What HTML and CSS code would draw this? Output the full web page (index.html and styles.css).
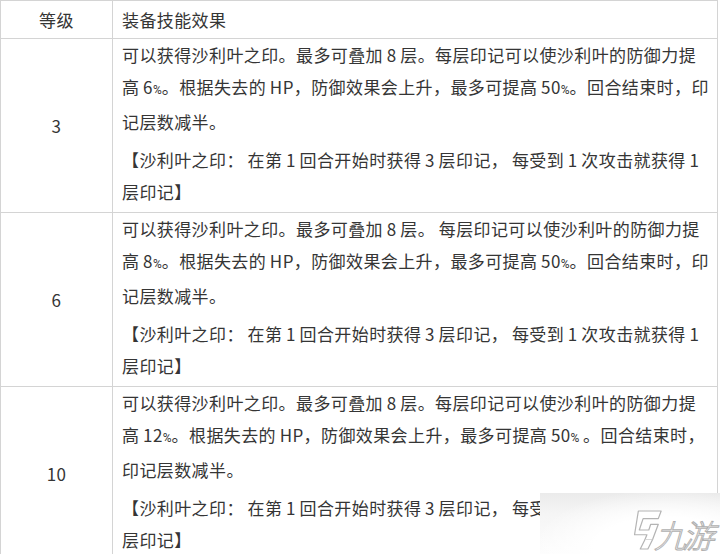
FILE: index.html
```html
<!DOCTYPE html>
<html lang="zh-CN">
<head>
<meta charset="utf-8">
<title>装备技能效果</title>
<link rel="stylesheet" href="styles.css">
</head>
<body>
<div class="page">
  <table class="skill-table">
    <colgroup>
      <col class="c-level">
      <col class="c-effect">
    </colgroup>
    <thead>
      <tr>
        <th class="col-level">等级</th>
        <th class="col-effect">装备技能效果</th>
      </tr>
    </thead>
    <tbody>
      <tr>
        <td class="col-level">3</td>
        <td class="col-effect">
          <p>可以获得沙利叶之印。最多可叠加 8 层。每层印记可以使沙利叶的防御力提<br>高 6<span class="pct">%</span>。根据失去的 HP，防御效果会上升，最多可提高 50<span class="pct">%</span>。回合结束时，印<br>记层数减半。</p>
          <p class="note">【沙利叶之印： 在第 1 回合开始时获得 3 层印记， 每受到 1 次攻击就获得 1<br>层印记】</p>
        </td>
      </tr>
      <tr>
        <td class="col-level">6</td>
        <td class="col-effect">
          <p>可以获得沙利叶之印。最多可叠加 8 层。 每层印记可以使沙利叶的防御力提<br>高 8<span class="pct">%</span>。根据失去的 HP，防御效果会上升，最多可提高 50<span class="pct">%</span>。回合结束时，印<br>记层数减半。</p>
          <p class="note">【沙利叶之印： 在第 1 回合开始时获得 3 层印记， 每受到 1 次攻击就获得 1<br>层印记】</p>
        </td>
      </tr>
      <tr>
        <td class="col-level">10</td>
        <td class="col-effect">
          <p>可以获得沙利叶之印。最多可叠加 8 层。每层印记可以使沙利叶的防御力提<br>高 12<span class="pct">%</span>。根据失去的 HP，防御效果会上升，最多可提高 50<span class="pct">%</span> 。回合结束时，<br>印记层数减半。</p>
          <p class="note">【沙利叶之印： 在第 1 回合开始时获得 3 层印记， 每受到 1 次攻击就获得 1<br>层印记】</p>
        </td>
      </tr>
    </tbody>
  </table>
  <div class="watermark">
    <div class="wm-brand">
      <svg class="wm-logo" viewBox="0 0 40 46" width="38" height="44" aria-hidden="true">
        <path d="M13 3 L37 3 L34 11 L18 11 L14 23 L24 23 L26 17 L34 17 L28 33 L20 33 L22 28 L9 28 Z" fill="#fff" stroke="#b4b4b4" stroke-width="1.3" stroke-linejoin="round"/>
        <path d="M20 33 L15 43 L23 43 L28 33" fill="#fff" stroke="#b4b4b4" stroke-width="1.3" stroke-linejoin="round"/>
      </svg>
      <span class="wm-text">九游</span>
    </div>
  </div>
</div>
</body>
</html>
```

FILE: styles.css
```css
html, body {
  margin: 0;
  padding: 0;
  background: #fff;
}

.page {
  position: relative;
  width: 720px;
  height: 554px;
  overflow: hidden;
}

.skill-table {
  border-collapse: collapse;
  table-layout: fixed;
  width: 717px;
  font-family: "Noto Sans CJK SC", "Liberation Sans", sans-serif;
  font-size: 17px;
  letter-spacing: 0.4px;
  word-spacing: -0.5px;
  color: #353535;
}

.c-level {
  width: 112px;
}

.c-effect {
  width: 605px;
}

.skill-table th,
.skill-table td {
  border: 1px solid #d4d4d4;
  font-weight: normal;
  vertical-align: middle;
  padding: 0 4px 4px 9px;
}

.skill-table th {
  height: 37px;
  padding: 0 4px 0 9px;
  text-align: left;
}

.skill-table .col-level {
  text-align: center;
  padding-left: 4px;
}

.skill-table td.col-level {
  padding-top: 2px;
  padding-bottom: 2px;
}

.skill-table p {
  margin: 0;
  line-height: 32px;
  white-space: nowrap;
}

.skill-table p.note {
  margin-top: 6px;
}

.pct {
  font-family: Roboto, "Liberation Sans", sans-serif;
  font-size: 12px;
  letter-spacing: 0;
}

.watermark {
  position: absolute;
  left: 540px;
  top: 493px;
  width: 180px;
  height: 61px;
  background:
    radial-gradient(ellipse at 70% 90%, #ffffff 0%, #ffffff 40%, rgba(255,255,255,0) 75%),
    linear-gradient(to bottom, #ebebeb 0%, #f5f5f5 35%, #fdfdfd 100%);
}

.wm-brand {
  position: absolute;
  right: 6px;
  bottom: 1px;
  display: flex;
  align-items: flex-end;
}

.wm-logo {
  display: block;
  margin-right: -6px;
  margin-bottom: 1px;
}

.wm-text {
  display: block;
  font-family: "Noto Sans CJK SC", sans-serif;
  font-size: 32px;
  font-weight: 300;
  color: #ffffff;
  -webkit-text-stroke: 1px #b0b0b0;
  letter-spacing: -4px;
  transform: skewX(-16deg);
  line-height: 38px;
}
```
